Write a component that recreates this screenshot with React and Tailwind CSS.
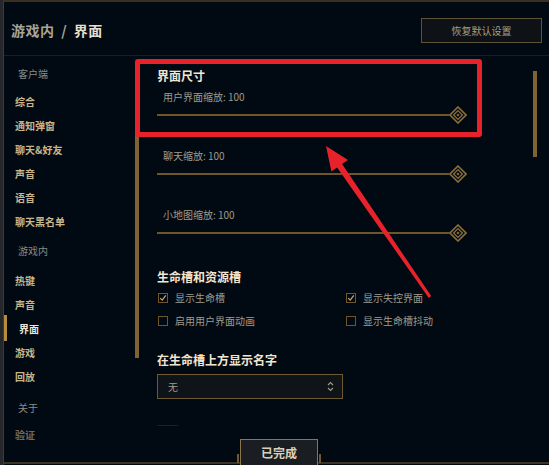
import React from "react";

const FONT = "font-['Noto_Sans_CJK_SC','Noto_Sans',sans-serif]";

function Diamond() {
  return (
    <svg width="18" height="18" viewBox="0 0 18 18" className="shrink-0">
      <polygon points="9,1 17,9 9,17 1,9" fill="#010a13" stroke="#8c6e3a" strokeWidth="1.6" />
      <polygon points="9,4.6 13.4,9 9,13.4 4.6,9" fill="none" stroke="#8c6e3a" strokeWidth="1.3" />
      <polygon points="9,7.4 10.6,9 9,10.6 7.4,9" fill="#8c6e3a" />
    </svg>
  );
}

function Slider({ label, first }) {
  return (
    <>
      <div className={`${first ? "mt-[5px]" : "mt-[24px]"} shrink-0 h-[14px] flex items-center pl-[6px] text-[10px] text-[#a09b8c]`}>
        {label}
      </div>
      <div className="mt-[3px] shrink-0 h-[18px] w-[310px] flex items-center">
        <div className="flex-1 h-[2px] bg-[#6e5628]" />
        <Diamond />
      </div>
    </>
  );
}

function Check({ checked, label }) {
  return (
    <div className="flex items-center gap-[7px] pl-[1px]">
      <div className="w-[10px] h-[10px] border border-[#6e5628] flex items-center justify-center">
        {checked && (
          <svg width="8" height="8" viewBox="0 0 8 8">
            <path d="M1.2 4.2 L3.2 6.2 L6.8 1.4" fill="none" stroke="#c8aa6e" strokeWidth="1.2" />
          </svg>
        )}
      </div>
      <span className="text-[10px] text-[#a09b8c] leading-none">{label}</span>
    </div>
  );
}

function NavLabel({ children, className = "" }) {
  return (
    <div className={`shrink-0 h-[24px] flex items-center pl-[14px] text-[10px] text-[#8c8a84] ${className}`}>{children}</div>
  );
}

function NavItem({ children, active, dim }) {
  return (
    <div className="relative shrink-0 h-[24px] flex items-center">
      {active && <div className="absolute left-0 top-[-1px] w-[3px] h-[26px] bg-[#b48c3c]" />}
      <span
        className={`text-[10px] font-bold ${
          active ? "pl-[15px] text-[#f0e6d2]" : dim ? "pl-[11px] text-[#6e6a5e]" : "pl-[11px] text-[#c8b68a]"
        }`}
      >
        {children}
      </span>
    </div>
  );
}

export default function App() {
  return (
    <div className={`${FONT} relative w-[549px] h-[465px] overflow-hidden bg-[#010a13] border-l-[3px] border-l-[#25272a]`}>
      <div className="flex flex-col h-full border-l border-l-[#4a3c20] border-t-[2px] border-t-[#3a3020]">
        {/* header */}
        <div className="h-[54px] shrink-0 flex items-center justify-between pl-[7px] pr-[7px] pt-[3px] border-b border-[#1a1e24]">
          <div className="text-[14px] font-bold text-[#a9a596] tracking-[0.5px]">
            游戏内 <span className="mx-[3px]">/</span> <span className="text-[#e6dfcc]">界面</span>
          </div>
          <div className="w-[121px] h-[25px] border border-[#5e5234] bg-[#0e1217] flex items-center justify-center text-[10px] text-[#a89e80]">
            恢复默认设置
          </div>
        </div>

        {/* body */}
        <div className="flex flex-1 min-h-0">
          {/* sidebar */}
          <div className="w-[131px] shrink-0 flex flex-col pt-[5px]">
            <NavLabel>客户端</NavLabel>
            <div className="shrink-0 h-[4px]" />
            <NavItem>综合</NavItem>
            <NavItem>通知弹窗</NavItem>
            <NavItem>聊天&amp;好友</NavItem>
            <NavItem>声音</NavItem>
            <NavItem>语音</NavItem>
            <NavItem>聊天黑名单</NavItem>
            <NavLabel className="mt-[5px]">游戏内</NavLabel>
            <div className="shrink-0 h-[6px]" />
            <NavItem>热键</NavItem>
            <NavItem>声音</NavItem>
            <NavItem active>界面</NavItem>
            <NavItem>游戏</NavItem>
            <NavItem>回放</NavItem>
            <NavLabel className="mt-[7px]">关于</NavLabel>
            <div className="shrink-0 h-[3px]" />
            <NavItem dim>验证</NavItem>
          </div>

          {/* left scroll thumb */}
          <div className="w-[4px] shrink-0">
            <div className="mt-[6px] h-[296px] w-full bg-[#7f6330]" />
          </div>

          {/* content */}
          <div className="flex-1 flex flex-col pl-[18px] pt-[11px]">
            <div className="shrink-0 h-[17px] flex items-center text-[12px] font-bold text-[#f0e6d2]">界面尺寸</div>
            <Slider label="用户界面缩放: 100" first />
            <Slider label="聊天缩放: 100" />
            <Slider label="小地图缩放: 100" />

            <div className="mt-[26px] shrink-0 h-[17px] flex items-center text-[12px] font-bold text-[#f0e6d2]">生命槽和资源槽</div>
            <div className="mt-[5px] shrink-0 h-[16px] grid grid-cols-[188px_1fr] items-center">
              <Check checked label="显示生命槽" />
              <Check checked label="显示失控界面" />
            </div>
            <div className="mt-[7px] shrink-0 h-[16px] grid grid-cols-[188px_1fr] items-center">
              <Check label="启用用户界面动画" />
              <Check label="显示生命槽抖动" />
            </div>

            <div className="mt-[22px] shrink-0 h-[17px] flex items-center text-[12px] font-bold text-[#f0e6d2]">在生命槽上方显示名字</div>
            <div className="mt-[6px] shrink-0 w-[186px] h-[25px] border border-[#6e5a32] bg-[#0f1419] flex items-center justify-between pl-[10px] pr-[8px]">
              <span className="text-[10px] text-[#a09b8c]">无</span>
              <svg width="7" height="11" viewBox="0 0 7 11">
                <path d="M1 4 L3.5 1.5 L6 4" fill="none" stroke="#a09b8c" strokeWidth="1.1" />
                <path d="M1 7 L3.5 9.5 L6 7" fill="none" stroke="#a09b8c" strokeWidth="1.1" />
              </svg>
            </div>
            <div className="mt-[26px] shrink-0 w-[21px] h-px bg-[#1c2026]" />
          </div>

          {/* right scroll thumb */}
          <div className="w-[4px] shrink-0 mr-[12px]">
            <div className="mt-[15px] h-[86px] w-full bg-[#7f6330]" />
          </div>
        </div>

        {/* footer */}
        <div className="relative h-[26px] shrink-0 flex pl-[236px]">
          <div className="absolute left-0 right-0 bottom-[1px] h-[2px] bg-[#3a3427]" />
          <div className="relative w-[78px] h-[27px] border border-[#8a7448] bg-[#1a1e23] flex items-center justify-center text-[12px] font-bold text-[#d8d0bc]">
            已完成
            <span className="absolute left-[-4px] bottom-[2px] w-[2px] h-[9px] bg-[#6e5a32]" />
            <span className="absolute right-[-4px] bottom-[2px] w-[2px] h-[9px] bg-[#6e5a32]" />
          </div>
        </div>
      </div>

      {/* annotation overlay */}
      <div className="absolute left-[132px] top-[59px] w-[347px] h-[78px] border-[5px] border-[#e8222b] rounded-[3px] pointer-events-none" />
      <svg className="absolute left-[-3px] top-0 pointer-events-none" width="549" height="465" viewBox="0 0 549 465">
        <polygon
          points="326,146 348,160 342.1,164.1 431.2,296.1 428.8,297.9 337.1,167.5 331.4,171.5"
          fill="#e8222b"
        />
      </svg>
    </div>
  );
}
